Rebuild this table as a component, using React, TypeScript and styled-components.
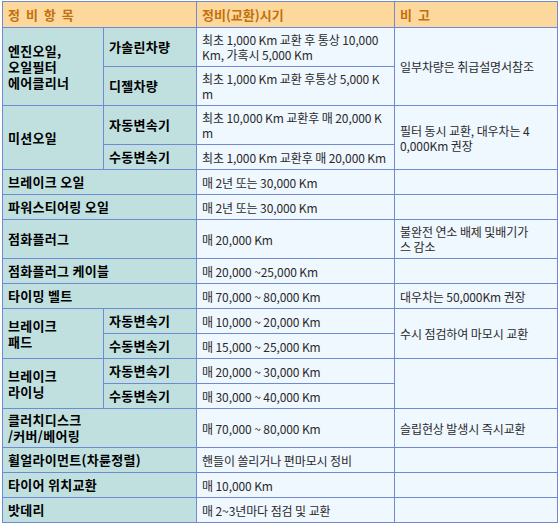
import React from "react";
import styled, { createGlobalStyle } from "styled-components";

const GlobalStyle = createGlobalStyle`
    html, body {
        margin: 0;
        padding: 0;
        background: #ffffff;
    }
    body {
        font-family: "Noto Sans CJK KR", "Noto Sans", sans-serif;
    }
`;

const Page = styled.div`
    padding: 1px 2px;
`;

const Table = styled.table`
    width: 555px;
    table-layout: fixed;
    border-collapse: collapse;
    border: 1px solid #7189d2;
`;

const Row = styled.tr`
    height: 25px;
`;

const BaseCell = styled.td`
    border: 1px solid #7189d2;
    padding: 4px 5px;
    line-height: 15px;
    vertical-align: middle;
    text-align: left;
`;

const HeadCell = styled(BaseCell).attrs({ as: "th" })`
    background: #fdd89c;
    color: #c2700e;
    font-size: 13px;
    font-weight: 700;
    word-spacing: 3px;
    padding: 5px 5px;
`;

const ItemCell = styled(BaseCell)`
    background: #c0e0e0;
    color: #000000;
    font-size: 13px;
    font-weight: 700;
    line-height: 16px;
    padding: 3px 5px;
    letter-spacing: 0.3px;
    white-space: nowrap;
`;

const TextCell = styled(BaseCell)`
    background: #eff7ff;
    color: #2a2a2a;
    font-size: 12px;
    letter-spacing: -0.1px;
    white-space: nowrap;
    overflow: hidden;
`;

const App: React.FC = () => {
    return (
        <Page>
            <GlobalStyle />
            <Table>
                <colgroup>
                    <col style={{ width: 101 }} />
                    <col style={{ width: 93 }} />
                    <col style={{ width: 198 }} />
                    <col style={{ width: 163 }} />
                </colgroup>
                <thead>
                    <Row>
                        <HeadCell colSpan={2}>정 비 항 목</HeadCell>
                        <HeadCell>정비(교환)시기</HeadCell>
                        <HeadCell>비 고</HeadCell>
                    </Row>
                </thead>
                <tbody>
                    <Row>
                        <ItemCell rowSpan={2}>
                            엔진오일,
                            <br />
                            오일필터
                            <br />
                            에어클리너
                        </ItemCell>
                        <ItemCell>가솔린차량</ItemCell>
                        <TextCell>
                            최초 1,000 Km 교환 후 통상 10,000
                            <br />
                            Km, 가혹시 5,000 Km
                        </TextCell>
                        <TextCell rowSpan={2}>일부차량은 취급설명서참조</TextCell>
                    </Row>
                    <Row>
                        <ItemCell>디젤차량</ItemCell>
                        <TextCell>
                            최초 1,000 Km 교환 후통상 5,000 K
                            <br />m
                        </TextCell>
                    </Row>
                    <Row>
                        <ItemCell rowSpan={2}>미션오일</ItemCell>
                        <ItemCell>자동변속기</ItemCell>
                        <TextCell>
                            최초 10,000 Km 교환후 매 20,000 K
                            <br />m
                        </TextCell>
                        <TextCell rowSpan={2}>
                            필터 동시 교환, 대우차는 4
                            <br />
                            0,000Km 권장
                        </TextCell>
                    </Row>
                    <Row>
                        <ItemCell>수동변속기</ItemCell>
                        <TextCell>최초 1,000 Km 교환후 매 20,000 Km</TextCell>
                    </Row>
                    <Row>
                        <ItemCell colSpan={2}>브레이크 오일</ItemCell>
                        <TextCell>매 2년 또는 30,000 Km</TextCell>
                        <TextCell />
                    </Row>
                    <Row>
                        <ItemCell colSpan={2}>파워스티어링 오일</ItemCell>
                        <TextCell>매 2년 또는 30,000 Km</TextCell>
                        <TextCell />
                    </Row>
                    <Row>
                        <ItemCell colSpan={2}>점화플러그</ItemCell>
                        <TextCell>매 20,000 Km</TextCell>
                        <TextCell>
                            불완전 연소 배제 및배기가
                            <br />스 감소
                        </TextCell>
                    </Row>
                    <Row>
                        <ItemCell colSpan={2}>점화플러그 케이블</ItemCell>
                        <TextCell>매 20,000 ~25,000 Km</TextCell>
                        <TextCell />
                    </Row>
                    <Row>
                        <ItemCell colSpan={2}>타이밍 벨트</ItemCell>
                        <TextCell>매 70,000 ~ 80,000 Km</TextCell>
                        <TextCell>대우차는 50,000Km 권장</TextCell>
                    </Row>
                    <Row>
                        <ItemCell rowSpan={2}>
                            브레이크
                            <br />
                            패드
                        </ItemCell>
                        <ItemCell>자동변속기</ItemCell>
                        <TextCell>매 10,000 ~ 20,000 Km</TextCell>
                        <TextCell rowSpan={2}>수시 점검하여 마모시 교환</TextCell>
                    </Row>
                    <Row>
                        <ItemCell>수동변속기</ItemCell>
                        <TextCell>매 15,000 ~ 25,000 Km</TextCell>
                    </Row>
                    <Row>
                        <ItemCell rowSpan={2}>
                            브레이크
                            <br />
                            라이닝
                        </ItemCell>
                        <ItemCell>자동변속기</ItemCell>
                        <TextCell>매 20,000 ~ 30,000 Km</TextCell>
                        <TextCell rowSpan={2} />
                    </Row>
                    <Row>
                        <ItemCell>수동변속기</ItemCell>
                        <TextCell>매 30,000 ~ 40,000 Km</TextCell>
                    </Row>
                    <Row>
                        <ItemCell colSpan={2}>
                            클러치디스크
                            <br />
                            /커버/베어링
                        </ItemCell>
                        <TextCell>매 70,000 ~ 80,000 Km</TextCell>
                        <TextCell>슬립현상 발생시 즉시교환</TextCell>
                    </Row>
                    <Row>
                        <ItemCell colSpan={2}>휠얼라이먼트(차륜정렬)</ItemCell>
                        <TextCell>핸들이 쏠리거나 편마모시 정비</TextCell>
                        <TextCell />
                    </Row>
                    <Row>
                        <ItemCell colSpan={2}>타이어 위치교환</ItemCell>
                        <TextCell>매 10,000 Km</TextCell>
                        <TextCell />
                    </Row>
                    <Row>
                        <ItemCell colSpan={2}>밧데리</ItemCell>
                        <TextCell>매 2~3년마다 점검 및 교환</TextCell>
                        <TextCell />
                    </Row>
                </tbody>
            </Table>
        </Page>
    );
};

export default App;
